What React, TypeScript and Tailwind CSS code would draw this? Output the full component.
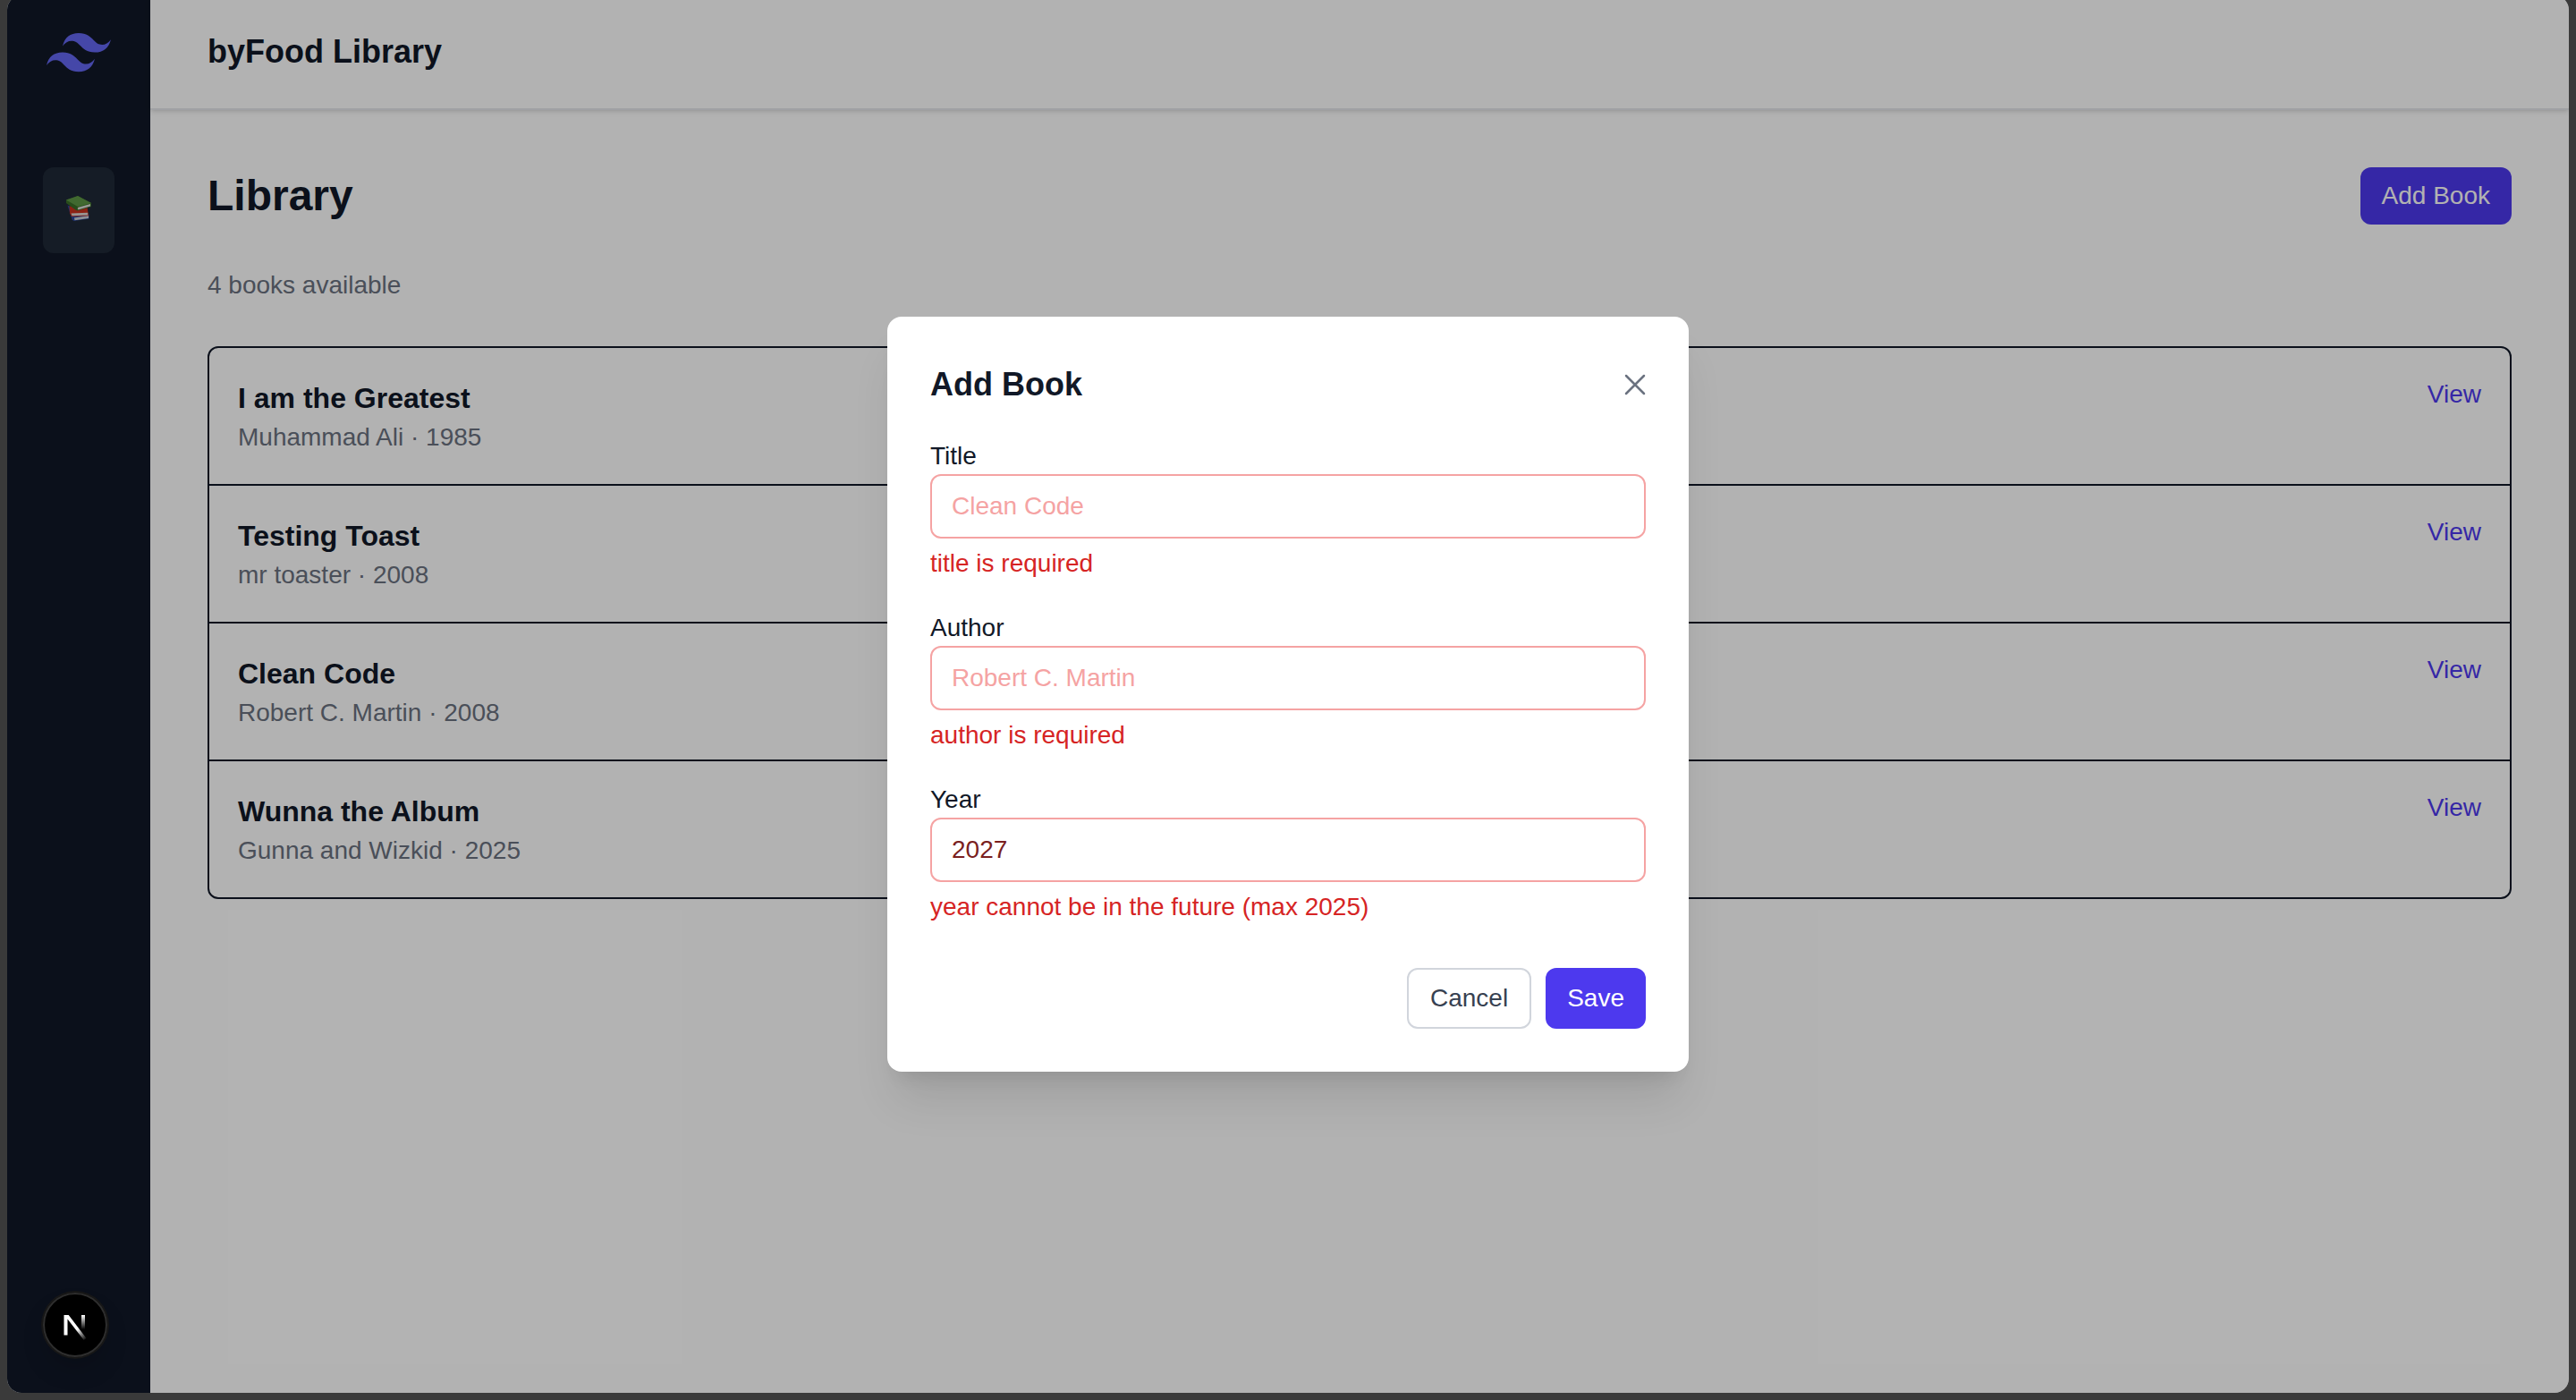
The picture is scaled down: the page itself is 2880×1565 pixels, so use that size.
import { useState } from "react";

type Book = { title: string; author: string; year: number };

const books: Book[] = [
  { title: "I am the Greatest", author: "Muhammad Ali", year: 1985 },
  { title: "Testing Toast", author: "mr toaster", year: 2008 },
  { title: "Clean Code", author: "Robert C. Martin", year: 2008 },
  { title: "Wunna the Album", author: "Gunna and Wizkid", year: 2025 },
];

function WaveLogo() {
  return (
    <svg viewBox="0 4.8 24 14.4" className="w-[72px] fill-[#6366f1]" aria-hidden="true">
      <path d="M12.001,4.8c-3.2,0-5.2,1.6-6,4.8c1.2-1.6,2.6-2.2,4.2-1.8c0.913,0.228,1.565,0.89,2.288,1.624C13.666,10.618,15.027,12,18.001,12c3.2,0,5.2-1.6,6-4.8c-1.2,1.6-2.6,2.2-4.2,1.8c-0.913-0.228-1.565-0.89-2.288-1.624C16.337,6.182,14.976,4.8,12.001,4.8z M6.001,12c-3.2,0-5.2,1.6-6,4.8c1.2-1.6,2.6-2.2,4.2-1.8c0.913,0.228,1.565,0.89,2.288,1.624c1.177,1.194,2.538,2.576,5.512,2.576c3.2,0,5.2-1.6,6-4.8c-1.2,1.6-2.6,2.2-4.2,1.8c-0.913-0.228-1.565-0.89-2.288-1.624C10.337,13.382,8.976,12,6.001,12z" />
    </svg>
  );
}

function BooksIcon() {
  return (
    <svg viewBox="0 0 28 28" className="size-7" aria-hidden="true">
      <path d="M1.500 10.500 25.500 20.500V25.500L8.500 28 6.500 26.500Z" fill="#2c4699" />
      <path d="M9 24.500 25 22v3L9.500 27.300Z" fill="#c9ccd6" />
      <path d="M3.500 11.500 23.500 12.500 25 22.200 6 23 4 19.500Z" fill="#c9301f" />
      <path d="M5.500 19.600 24.200 18.800v2.600L6.500 22.200Z" fill="#dcd5d3" />
      <path d="M0 4.500 13 0 28 8v4L13 16.500 11 16 0 8Z" fill="#3a6e28" />
      <path d="M0 4.500 13 0 28 8 13 12Z" fill="#5d9745" />
      <path d="M13.500 12.800 27 9v2.600L13.500 15.400 12.600 14Z" fill="#dcdcd6" />
    </svg>
  );
}

function CloseIcon() {
  return (
    <svg viewBox="0 0 24 24" className="size-6" fill="none" stroke="currentColor" strokeWidth="2.5" strokeLinecap="round" aria-hidden="true">
      <path d="M2 2 22 22M22 2 2 22" />
    </svg>
  );
}

function DevToolsBadge() {
  return (
    <button
      type="button"
      aria-label="Open developer tools"
      className="absolute bottom-10 left-10 rounded-full bg-black shadow-[0_0_0_2px_#171717,0_16px_32px_-8px_rgba(0,0,0,0.24)]"
    >
      <svg viewBox="0 0 72 72" className="size-18" fill="none" aria-hidden="true">
        <defs>
          <linearGradient id="diagonal" x1="38" y1="41" x2="48" y2="53" gradientUnits="userSpaceOnUse">
            <stop stopColor="#fff" />
            <stop offset="1" stopColor="#fff" stopOpacity="0" />
          </linearGradient>
          <linearGradient id="upright" x1="45" y1="25" x2="45" y2="41" gradientUnits="userSpaceOnUse">
            <stop stopColor="#fff" />
            <stop offset="1" stopColor="#fff" stopOpacity="0" />
          </linearGradient>
        </defs>
        <circle cx="36" cy="36" r="35" stroke="#2e2e2e" strokeWidth="2" />
        <path d="M23.500 25h5.200L48.500 51l-2.800 2L27.500 29.500v18h-4Z" fill="url(#diagonal)" />
        <path d="M43 25h4v17h-4Z" fill="url(#upright)" />
      </svg>
    </button>
  );
}

function Sidebar() {
  return (
    <aside className="flex w-40 shrink-0 flex-col items-center bg-[#111827]">
      <div className="flex h-32 items-center">
        <WaveLogo />
      </div>
      <nav className="mt-16">
        <a href="#library" aria-label="Library" className="flex h-24 w-20 items-center justify-center rounded-xl bg-[#1f2937] pb-1">
          <BooksIcon />
        </a>
      </nav>
    </aside>
  );
}

function BookRow({ book }: { book: Book }) {
  return (
    <li className="flex items-start justify-between p-8">
      <div>
        <p className="text-[32px]/[48px] font-bold">{book.title}</p>
        <p className="text-[#6b7280]">
          {book.author} · {book.year}
        </p>
      </div>
      <a href="#view" className="text-[#4d39ee]">
        View
      </a>
    </li>
  );
}

type FieldProps = { id: string; label: string; placeholder?: string; initial?: string; error: string };

function Field({ id, label, placeholder, initial = "", error }: FieldProps) {
  const [value, setValue] = useState(initial);
  return (
    <div className="flex flex-col">
      <label htmlFor={id}>{label}</label>
      <input
        id={id}
        value={value}
        placeholder={placeholder}
        onChange={(e) => setValue(e.target.value)}
        aria-invalid="true"
        aria-describedby={`${id}-error`}
        className="rounded-xl border-2 border-[#f5a3a3] px-[22px] py-[14px] text-[#7a1f1f] outline-none placeholder:text-[#f5a3a3]"
      />
      <p id={`${id}-error`} className="mt-2 text-[#d62424]">
        {error}
      </p>
    </div>
  );
}

function AddBookDialog() {
  return (
    <div className="absolute inset-0 flex items-center justify-center bg-black/30">
      <form
        role="dialog"
        aria-labelledby="dialog-title"
        onSubmit={(e) => e.preventDefault()}
        className="w-full max-w-4xl rounded-2xl bg-white p-12 shadow-[0_40px_50px_-10px_rgba(0,0,0,0.1),0_16px_20px_-12px_rgba(0,0,0,0.1)]"
      >
        <div className="flex items-center justify-between">
          <h2 id="dialog-title" className="text-4xl/[56px] font-bold">
            Add Book
          </h2>
          <button type="button" aria-label="Close" className="text-[#6b7280]">
            <CloseIcon />
          </button>
        </div>
        <div className="mt-8 flex flex-col gap-8">
          <Field id="title" label="Title" placeholder="Clean Code" error="title is required" />
          <Field id="author" label="Author" placeholder="Robert C. Martin" error="author is required" />
          <Field id="year" label="Year" initial="2027" error="year cannot be in the future (max 2025)" />
        </div>
        <div className="mt-12 flex justify-end gap-4">
          <button type="button" className="rounded-xl border-2 border-gray-300 px-6 py-3 text-[#374151]">
            Cancel
          </button>
          <button type="submit" className="rounded-xl bg-[#4d39ee] px-6 text-white">
            Save
          </button>
        </div>
      </form>
    </div>
  );
}

export default function App() {
  return (
    <div className="flex h-screen flex-col overflow-hidden bg-[#3a3a3a] px-2 pb-2 font-['Liberation_Sans',Arial,sans-serif] text-[28px]/[40px] text-[#111827]">
      <div className="relative -mt-[5px] flex flex-1 overflow-hidden rounded-2xl bg-white">
        <Sidebar />
        <div className="flex flex-1 flex-col">
          <header className="flex h-32 items-center border-b-2 border-gray-200 px-16 shadow-[0_2px_6px_rgba(0,0,0,0.1),0_2px_4px_-2px_rgba(0,0,0,0.1)]">
            <span className="text-4xl/[56px] font-bold">byFood Library</span>
          </header>
          <main className="flex flex-col gap-12 p-16">
            <div className="flex items-center justify-between">
              <h1 className="text-5xl/[64px] font-bold">Library</h1>
              <button type="button" className="rounded-xl bg-[#4d39ee] px-6 py-3 text-white">
                Add Book
              </button>
            </div>
            <p className="text-[#6b7280]">4 books available</p>
            <ul className="divide-y-2 divide-[#111827] rounded-xl border-2 border-[#111827]">
              {books.map((book) => (
                <BookRow key={book.title} book={book} />
              ))}
            </ul>
          </main>
        </div>
        <AddBookDialog />
        <DevToolsBadge />
      </div>
    </div>
  );
}
